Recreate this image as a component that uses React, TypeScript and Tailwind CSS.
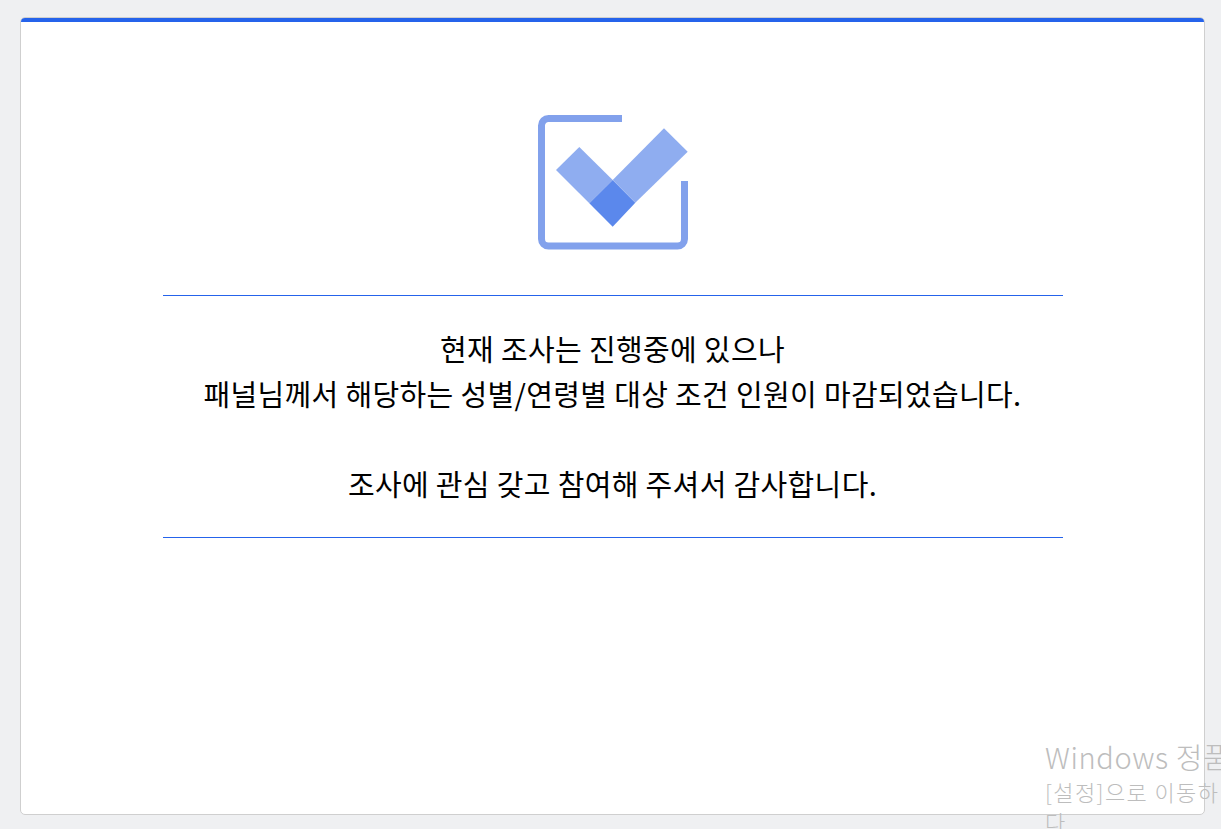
export default function App() {
  const font = { fontFamily: '"Noto Sans CJK KR", "Noto Sans", sans-serif' };
  return (
    <div className="relative h-[829px] w-[1221px] overflow-hidden bg-[#eff0f2] pl-5 pr-4 pt-[17px] pb-[14px]" style={font}>
      <div className="flex h-full flex-col items-center rounded-[5px] border border-[#cfcfcf] bg-white">
        <div className="h-1 w-full shrink-0 rounded-t-[4px] bg-[#2563eb]" />
        <div className="mt-[92px] ml-px h-[136px] w-[152px] shrink-0">
          <svg width="152" height="136" viewBox="0 0 152 136" fill="none">
            <path d="M85 4.5H11.5A7 7 0 0 0 4.5 11.5V125A7 7 0 0 0 11.500 132H140.500A7 7 0 0 0 147.500 125V67" stroke="#82a1ec" strokeWidth="7" />
            <path d="M19 56L42.3 33L75.7 66L52.3 89.3Z" fill="#8fadf0" />
            <path d="M75.7 66L98.3 88.7L75.7 112.7L52.3 89.3Z" fill="#5b88ec" />
            <path d="M75.7 66L127 14.3L150.7 37.7L98.3 88.7Z" fill="#8fadf0" />
          </svg>
        </div>
        <div className="mt-[45px] flex w-[900px] flex-col items-center border-y border-[#2563eb] pt-[30px] pb-[31px] text-center text-[29px] leading-[45px] tracking-[0.35px] text-black">
          <p>현재 조사는 진행중에 있으나</p>
          <p>패널님께서 해당하는 성별/연령별 대상 조건 인원이 마감되었습니다.</p>
          <p className="mt-[45px]">조사에 관심 갖고 참여해 주셔서 감사합니다.</p>
        </div>
      </div>
      <div className="absolute left-[1045px] top-[737px] w-[176px] font-light text-[#bdbdbd]">
        <div className="whitespace-nowrap text-[29px] leading-[38px] tracking-[0.6px]">Windows 정품</div>
        <div className="mt-[2px] whitespace-nowrap text-[22px] leading-[28px] tracking-[1.4px]">[설정]으로 이동하</div>
        <div className="mt-[2px] text-[22px] leading-[28px]">다</div>
      </div>
    </div>
  );
}
